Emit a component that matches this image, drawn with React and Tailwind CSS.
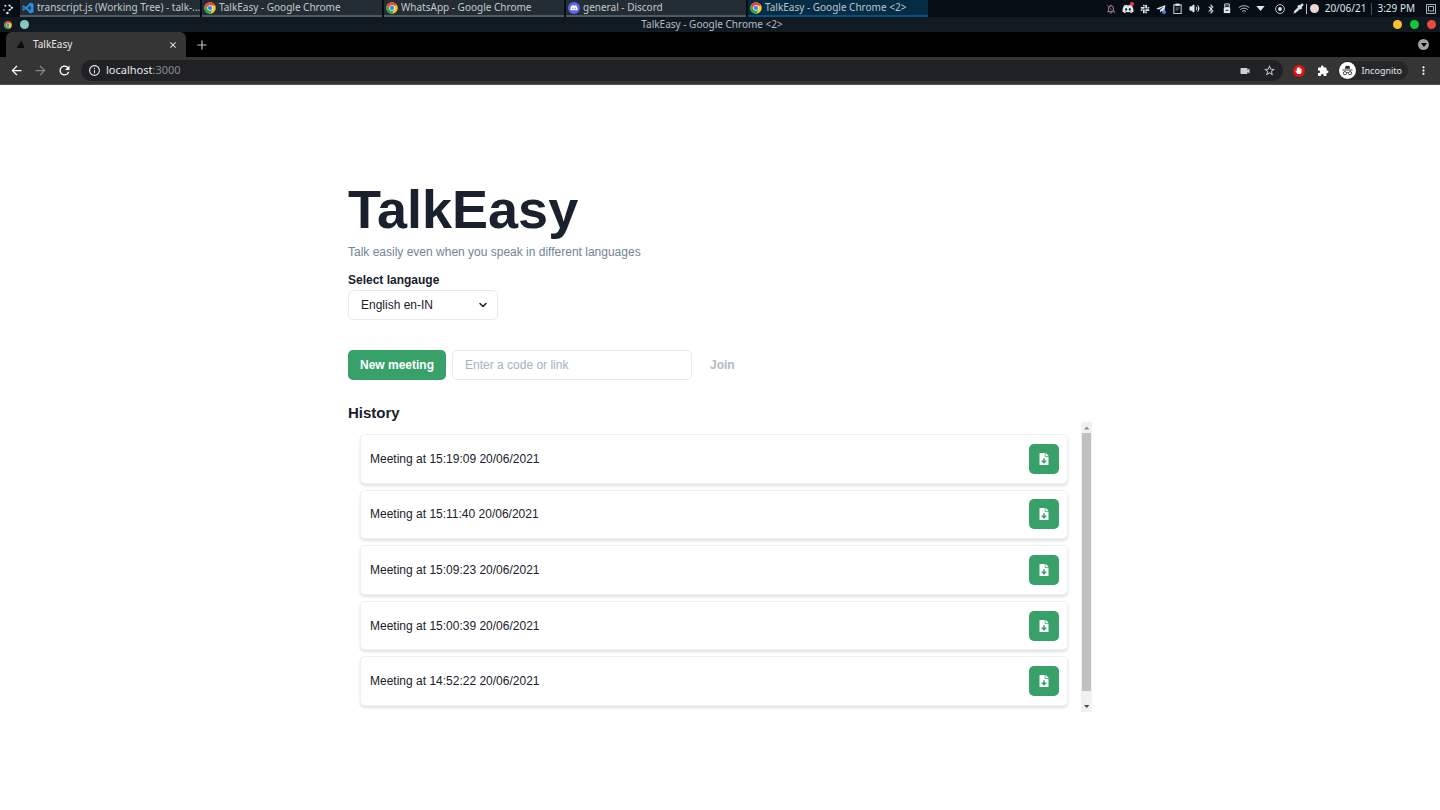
import clsx from "clsx";
import { FaBluetoothB, FaDiscord, FaFileDownload, FaHandPaper, FaSlack, FaTelegramPlane } from "react-icons/fa";
import { MdArrowBack, MdArrowForward, MdClose, MdExtension, MdInfoOutline, MdMoreVert, MdRefresh, MdStarBorder, MdVideocam } from "react-icons/md";
import { ChevronDown, Pipette, Plus, Volume2, Wifi } from "lucide-react";

const tasks = [
  { title: "transcript.js (Working Tree) - talk-...", icon: CodeLogo },
  { title: "TalkEasy - Google Chrome", icon: ChromeLogo },
  { title: "WhatsApp - Google Chrome", icon: ChromeLogo },
  { title: "general - Discord", icon: DiscordLogo },
  { title: "TalkEasy - Google Chrome <2>", icon: ChromeLogo, active: true },
];

const languages = ["English en-IN", "Hindi hi-IN", "Tamil ta-IN"];

const meetings = [
  "15:19:09 20/06/2021",
  "15:11:40 20/06/2021",
  "15:09:23 20/06/2021",
  "15:00:39 20/06/2021",
  "14:52:22 20/06/2021",
];

function ChromeLogo({ className }) {
  return (
    <svg viewBox="0 0 48 48" className={className} aria-hidden="true">
      <circle cx="24" cy="24" r="23" fill="#fbc926" />
      <path d="M4.1 12.5A23 23 0 0 0 24 47L34 29.8 24 24 14 29.8Z" fill="#2aa84f" />
      <path d="M4.1 12.5 14 29.8 24 13.5h19.9A23 23 0 0 0 4.1 12.5Z" fill="#e8453c" />
      <circle cx="24" cy="24" r="11" fill="#fff" />
      <circle cx="24" cy="24" r="8.6" fill="#4285f4" />
    </svg>
  );
}

function CodeLogo({ className }) {
  return (
    <svg viewBox="0 0 24 24" className={className} aria-hidden="true">
      <path d="M17 1 23 3.6v16.8L17 23 7.4 14.2 3.2 17.4 1 16.2V7.8l2.2-1.2 4.2 3.2ZM17 7.2 10.8 12l6.2 4.8ZM3 9.4v5.2L5.6 12Z" fill="#2b8fe0" fillRule="evenodd" />
    </svg>
  );
}

function DiscordLogo({ className }) {
  return (
    <span className={clsx(className, "flex items-center justify-center rounded-full bg-[#5865f2]")}>
      <FaDiscord className="size-2 text-white" />
    </span>
  );
}

function LauncherIcon() {
  return (
    <svg viewBox="0 0 12 12" className="size-3" aria-hidden="true" fill="#dfe6ea">
      <circle cx="3.4" cy="2.8" r="1" />
      <circle cx="2" cy="7" r="0.8" />
      <circle cx="5.4" cy="10" r="1.3" />
      <path d="m6.6 1.8 3.6 3-3.6 3" fill="none" stroke="#dfe6ea" strokeWidth="1.6" strokeDasharray="2.6 0.7" />
    </svg>
  );
}

function MutedBellIcon() {
  return (
    <svg viewBox="0 0 12 12" className="size-[10px]" aria-hidden="true" fill="none">
      <path d="M2 9.2h8L8.9 7.6V5A2.9 2.9 0 0 0 3.1 5v2.6ZM5 10.8h2M6 1v1" stroke="#aab3b8" />
      <path d="m1 1 10 10.5" stroke="#b3452f" strokeWidth="1.2" />
    </svg>
  );
}

function ClipboardIcon() {
  return (
    <svg viewBox="0 0 12 12" className="size-[11px]" aria-hidden="true" fill="none">
      <path d="M2 2h8v9.4H2Z" stroke="#b9c6cc" strokeWidth="1.2" />
      <path d="M3.8.6h4.4v2.6H3.8Z" fill="#dfe6ea" />
      <path d="M4 5.5h4M4 7.5h3" stroke="#7f8d95" />
    </svg>
  );
}

function UsbDriveIcon() {
  return (
    <svg viewBox="0 0 10 12" className="h-[11px] w-[10px]" aria-hidden="true">
      <path d="M2.5 1h5v4h-5Z" fill="none" stroke="currentColor" />
      <path d="M4 2.5v1M6 2.5v1" stroke="currentColor" />
      <path d="M1.5 5h7v6h-7Z" fill="currentColor" />
      <path d="M3.5 8h3" stroke="#0a131a" />
    </svg>
  );
}

function IncognitoIcon() {
  return (
    <svg viewBox="0 0 18 18" className="size-[17px]" aria-hidden="true">
      <circle cx="9" cy="9" r="9" fill="#fff" />
      <path d="M6.1 7.1 7 4.2q.2-.5.8-.3L9 4.3l1.2-.4q.6-.2.8.3l.9 2.9Z" fill="#26282b" />
      <path d="M3.7 8.5h10.6" stroke="#26282b" strokeWidth="1" />
      <g fill="none" stroke="#26282b" strokeWidth="0.9">
        <circle cx="6.3" cy="11.8" r="1.7" />
        <circle cx="11.7" cy="11.8" r="1.7" />
        <path d="M8 11.5q1-.7 2 0" />
      </g>
    </svg>
  );
}

function Tray() {
  return (
    <div className="flex shrink-0 items-center text-[#dfe6ea]">
      <div className="flex items-center gap-[6px]">
        <MutedBellIcon />
        <span className="relative w-3">
          <FaDiscord className="size-3" />
          <span className="absolute -top-px right-0 size-1 rounded-full bg-[#ef3e36]" />
        </span>
        <FaSlack className="size-[10px]" />
        <span className="relative size-[10px]">
          <FaTelegramPlane className="size-[10px]" />
          <span className="absolute right-0 bottom-0 size-1 rounded-full bg-[#2d8fe8]" />
        </span>
        <ClipboardIcon />
        <Volume2 className="size-[11px] fill-current" />
        <FaBluetoothB className="size-[10px]" />
        <UsbDriveIcon />
        <Wifi className="size-3 text-[#a8b1b7]" />
        <svg viewBox="0 0 10 6" className="h-[5px] w-[9px]" aria-hidden="true">
          <path d="M0 0h10L5 6Z" fill="currentColor" />
        </svg>
      </div>
      <div className="ml-[10px] flex items-center">
        <svg viewBox="0 0 12 12" className="size-[10px]" aria-hidden="true">
          <circle cx="6" cy="6" r="5.3" fill="none" stroke="currentColor" />
          <circle cx="6" cy="6" r="2.3" fill="currentColor" />
        </svg>
        <Pipette className="ml-2 size-[11px] fill-current" />
        <span className="ml-[2px] h-[10px] w-px bg-[#b8c0c4]" />
        <span className="ml-[3px] size-[9px] rounded-full bg-[#ecd5ce]" />
      </div>
      <span className="ml-[6px] text-[10px]">20/06/21</span>
      <span className="mx-[5px] h-3 w-px bg-[#46525a]" />
      <span className="text-[10px]">3:29 PM</span>
      <svg viewBox="0 0 10 10" className="ml-[11px] size-[10px]" aria-hidden="true">
        <path d="M.5.5h9v9h-9Z M2.5 2.5h5v4.5h-5Z" fill="none" stroke="#aab3b8" />
      </svg>
    </div>
  );
}

function Taskbar() {
  return (
    <div className="flex h-[17px] items-center justify-between bg-[#070d14] pr-1">
      <div className="flex items-center">
        <button type="button" aria-label="Launcher" className="flex w-5 pl-[2px]">
          <LauncherIcon />
        </button>
        <div className="flex gap-[2px]">
          {tasks.map(({ title, icon: TaskIcon, active }) => (
            <button
              key={title}
              type="button"
              className={clsx(
                "flex h-[17px] w-[180px] items-center gap-[3px] border-b-2 px-[2px] text-[10px] whitespace-nowrap",
                active ? "border-[#075283] bg-[#062c44] text-[#b9c5cd]" : "border-[#4b5b67] bg-[#232d33] text-[#c3cacf]",
              )}
            >
              <TaskIcon className="size-3 shrink-0" />
              {title}
            </button>
          ))}
        </div>
      </div>
      <Tray />
    </div>
  );
}

function TitleBar() {
  return (
    <div className="flex h-[15px] items-center bg-[#121a21] px-1">
      <div className="flex flex-1 items-center gap-2">
        <ChromeLogo className="size-2" />
        <span className="size-[9px] rounded-full bg-[#84c9bd]" />
      </div>
      <span className="mr-4 text-[10px] text-[#b4bdc3]">TalkEasy - Google Chrome &lt;2&gt;</span>
      <div className="flex flex-1 justify-end gap-2">
        <button type="button" aria-label="Minimize" className="size-[9px] rounded-full bg-[#fbc02d]" />
        <button type="button" aria-label="Maximize" className="size-[9px] rounded-full bg-[#15c639]" />
        <button type="button" aria-label="Close" className="size-[9px] rounded-full bg-[#e84b40]" />
      </div>
    </div>
  );
}

function TabStrip() {
  return (
    <div className="flex h-[25px] items-center bg-black pr-[11px] pl-[6px]">
      <div className="flex h-[25px] w-[180px] items-center rounded-t-md bg-[#353535] px-2">
        <svg viewBox="0 0 8 8" className="ml-[2px] size-[9px]" aria-hidden="true">
          <path d="M5 .4 7.4 7H.4Z" fill="#0a0a0a" />
        </svg>
        <span className="ml-2 flex-1 text-[10px] text-[#e6e6e6]">TalkEasy</span>
        <button type="button" aria-label="Close tab">
          <MdClose className="size-[10px] text-white" />
        </button>
      </div>
      <button type="button" aria-label="New tab" className="ml-[9px]">
        <Plus className="size-[14px] text-[#c6c6c6]" />
      </button>
      <button type="button" aria-label="Search tabs" className="ml-auto flex size-[11px] items-center justify-center rounded-full bg-[#9fa2a5]">
        <svg viewBox="0 0 6 4" className="h-1 w-[6px]" aria-hidden="true">
          <path d="M0 0h6L3 4Z" fill="#000" />
        </svg>
      </button>
    </div>
  );
}

function Toolbar() {
  return (
    <div className="flex h-7 items-center border-b border-[#55504f] bg-[#353535] pr-[10px] pl-[9px] text-white">
      <div className="flex gap-[9px]">
        <button type="button" aria-label="Back"><MdArrowBack className="size-[15px]" /></button>
        <button type="button" aria-label="Forward"><MdArrowForward className="size-[15px] text-[#858585]" /></button>
        <button type="button" aria-label="Reload"><MdRefresh className="size-[15px]" /></button>
      </div>
      <div className="ml-[9px] flex h-[21px] flex-1 items-center rounded-full bg-[#202124] px-[7px]">
        <MdInfoOutline className="size-[13px] text-[#e2e2e2]" />
        <a href="http://localhost:3000" className="ml-[5px] text-[11px] text-[#e8e8e8]">
          localhost<span className="text-[#888b8f]">:3000</span>
        </a>
        <MdVideocam className="ml-auto size-3 text-[#d0d0d0]" />
        <MdStarBorder className="ml-3 size-[13px] text-[#d0d0d0]" />
      </div>
      <button type="button" aria-label="Ad blocker" className="ml-[10px] flex size-3 items-center justify-center rounded-full bg-[#e01212]">
        <FaHandPaper className="size-[7px]" />
      </button>
      <button type="button" aria-label="Extensions" className="ml-3">
        <MdExtension className="size-3" />
      </button>
      <button type="button" className="ml-[9px] flex h-[19px] items-center gap-[6px] rounded-full bg-[#262729] pr-[6px] pl-px text-[9px] text-[#e6e6e6]">
        <IncognitoIcon />
        Incognito
      </button>
      <button type="button" aria-label="Menu" className="ml-[9px]">
        <MdMoreVert className="size-[13px]" />
      </button>
    </div>
  );
}

function MeetingCard({ time }) {
  return (
    <li className="flex flex-1 items-center justify-between rounded-[5px] border border-[#eef0f1] bg-white pr-2 pl-[9px] shadow-[0_2px_3px_rgba(0,0,0,0.12)]">
      <span>Meeting at {time}</span>
      <button
        type="button"
        aria-label={`Download transcript ${time}`}
        className="flex size-[30px] items-center justify-center rounded-[5px] bg-[#38a169] text-white"
      >
        <FaFileDownload className="size-3" />
      </button>
    </li>
  );
}

function ScrollBar() {
  return (
    <div className="flex w-[11px] flex-col items-center bg-[#f1f1f1]" aria-hidden="true">
      <svg viewBox="0 0 11 11" className="size-[11px]">
        <path d="M3 7.5h5.4L5.7 4.5Z" fill="#8a8a8a" />
      </svg>
      <div className="w-[9px] grow-[26] bg-[#c1c1c1]" />
      <div className="grow" />
      <svg viewBox="0 0 11 11" className="size-[11px]">
        <path d="M3 4h5.4L5.7 7Z" fill="#4c4c4c" />
      </svg>
    </div>
  );
}

export default function App() {
  return (
    <div className="min-h-screen bg-white">
      <header className="font-['Noto_Sans',sans-serif]">
        <Taskbar />
        <TitleBar />
        <TabStrip />
        <Toolbar />
      </header>

      <main className="mx-auto w-full max-w-[744px] pt-[94px] font-['Liberation_Sans',Arial,sans-serif] text-xs text-[#1a202c]">
        <h1 className="mb-1 text-[54px] leading-[60px] font-bold">TalkEasy</h1>
        <p className="leading-[18px] text-[#728594]">Talk easily even when you speak in different languages</p>

        <div className="mt-[10px]">
          <label htmlFor="language" className="block leading-[18px] font-bold">Select langauge</label>
          <div className="relative mt-px w-[150px]">
            <select id="language" className="h-[30px] w-full appearance-none rounded-[5px] border border-[#e6eaed] bg-white pr-6 pl-3">
              {languages.map((name) => (
                <option key={name}>{name}</option>
              ))}
            </select>
            <ChevronDown className="pointer-events-none absolute top-[9px] right-[9px] size-3" strokeWidth={3} />
          </div>
        </div>

        <form className="mt-[30px] flex items-center gap-[6px]" onSubmit={(e) => e.preventDefault()}>
          <button type="button" className="h-[30px] rounded-[5px] bg-[#38a169] px-3 font-bold text-white">New meeting</button>
          <input
            type="text"
            aria-label="Meeting code"
            placeholder="Enter a code or link"
            className="h-[30px] w-60 rounded-[5px] border border-[#e6eaed] px-3 placeholder:text-[#a0b4c0]"
          />
          <button type="submit" disabled className="h-[30px] px-3 font-bold text-[#b3bcc1]">Join</button>
        </form>

        <section className="mt-6">
          <h2 className="text-[15px] leading-[18px] font-bold">History</h2>
          <div className="flex h-[290px] justify-between">
            <ul className="flex flex-1 flex-col gap-[6px] pt-3 pr-[13px] pb-[6px] pl-3">
              {meetings.map((time) => (
                <MeetingCard key={time} time={time} />
              ))}
            </ul>
            <ScrollBar />
          </div>
        </section>
      </main>
    </div>
  );
}
